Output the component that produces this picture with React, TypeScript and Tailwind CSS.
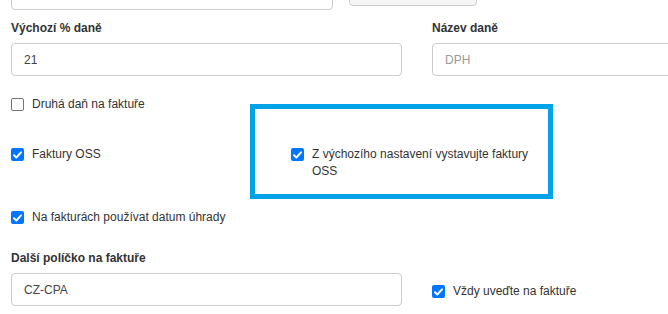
import React from 'react';

const FONT = '"Liberation Sans", Arial, sans-serif';

const Check: React.FC<{ checked?: boolean }> = ({ checked }) =>
    checked ? (
        <span className="mt-[2px] flex h-[13px] w-[13px] shrink-0 items-center justify-center rounded-[2px] bg-[#0075ff]">
            <svg width="9" height="8" viewBox="0 0 9 8" fill="none">
                <path d="M1 4.2 L3.4 6.5 L8 1.3" stroke="#fff" strokeWidth="1.9" strokeLinecap="round" strokeLinejoin="round" />
            </svg>
        </span>
    ) : (
        <span className="mt-[2px] h-[13px] w-[13px] shrink-0 rounded-[2px] border border-[#767676] bg-white" />
    );

const CheckRow: React.FC<{ checked?: boolean; label: string; className?: string }> = ({ checked, label, className }) => (
    <label className={`flex items-start gap-[8px] text-[12px] leading-[17px] text-[#333] ${className ?? ''}`}>
        <Check checked={checked} />
        <span>{label}</span>
    </label>
);

const Label: React.FC<{ children: React.ReactNode }> = ({ children }) => (
    <div className="mb-[5px] text-[12px] font-bold leading-[20px] text-[#333]">{children}</div>
);

const Input: React.FC<{ value?: string; placeholder?: string; className?: string }> = ({ value, placeholder, className }) => (
    <div className={`flex h-[33px] items-center rounded-[4px] border border-[#ccc] bg-white px-[12px] text-[12px] ${className ?? ''}`}>
        {value ? <span className="text-[#444]">{value}</span> : <span className="text-[#999]">{placeholder}</span>}
    </div>
);

export default function App() {
    return (
        <div className="relative h-[314px] w-[668px] overflow-hidden bg-white" style={{ fontFamily: FONT }}>
            <div className="w-[900px] pl-[11px]">
                {/* top row, cut off */}
                <div className="mt-[-23px] flex items-start">
                    <div className="h-[33px] w-[322px] rounded-[4px] border border-[#ccc] bg-white" />
                    <div className="ml-[16px] h-[29px] w-[128px] rounded-[4px] border border-[#ccc] bg-[#f5f5f5]" />
                </div>

                <div className="mt-[8px] grid grid-cols-[391px_391px] gap-x-[30px]">
                    <div>
                        <Label>Výchozí % daně</Label>
                        <Input value="21" />
                    </div>
                    <div>
                        <Label>Název daně</Label>
                        <Input placeholder="DPH" />
                    </div>
                </div>

                <CheckRow label="Druhá daň na faktuře" className="mt-[20px]" />

                <div className="mt-[33px] grid grid-cols-[250px_250px] gap-x-[30px]">
                    <CheckRow checked label="Faktury OSS" />
                    <CheckRow checked label="Z výchozího nastavení vystavujte faktury OSS" />
                </div>

                <CheckRow checked label="Na fakturách používat datum úhrady" className="mt-[29px]" />

                <div className="mt-[22px] grid grid-cols-[391px_391px] gap-x-[30px]">
                    <div>
                        <Label>Další políčko na faktuře</Label>
                        <Input value="CZ-CPA" />
                    </div>
                    <div className="pt-[35px]">
                        <CheckRow checked label="Vždy uveďte na faktuře" />
                    </div>
                </div>
            </div>

            {/* highlight annotation */}
            <div className="absolute left-[250px] top-[104px] h-[95px] w-[303px] border-[5px] border-[#00a2e8]" />
        </div>
    );
}
